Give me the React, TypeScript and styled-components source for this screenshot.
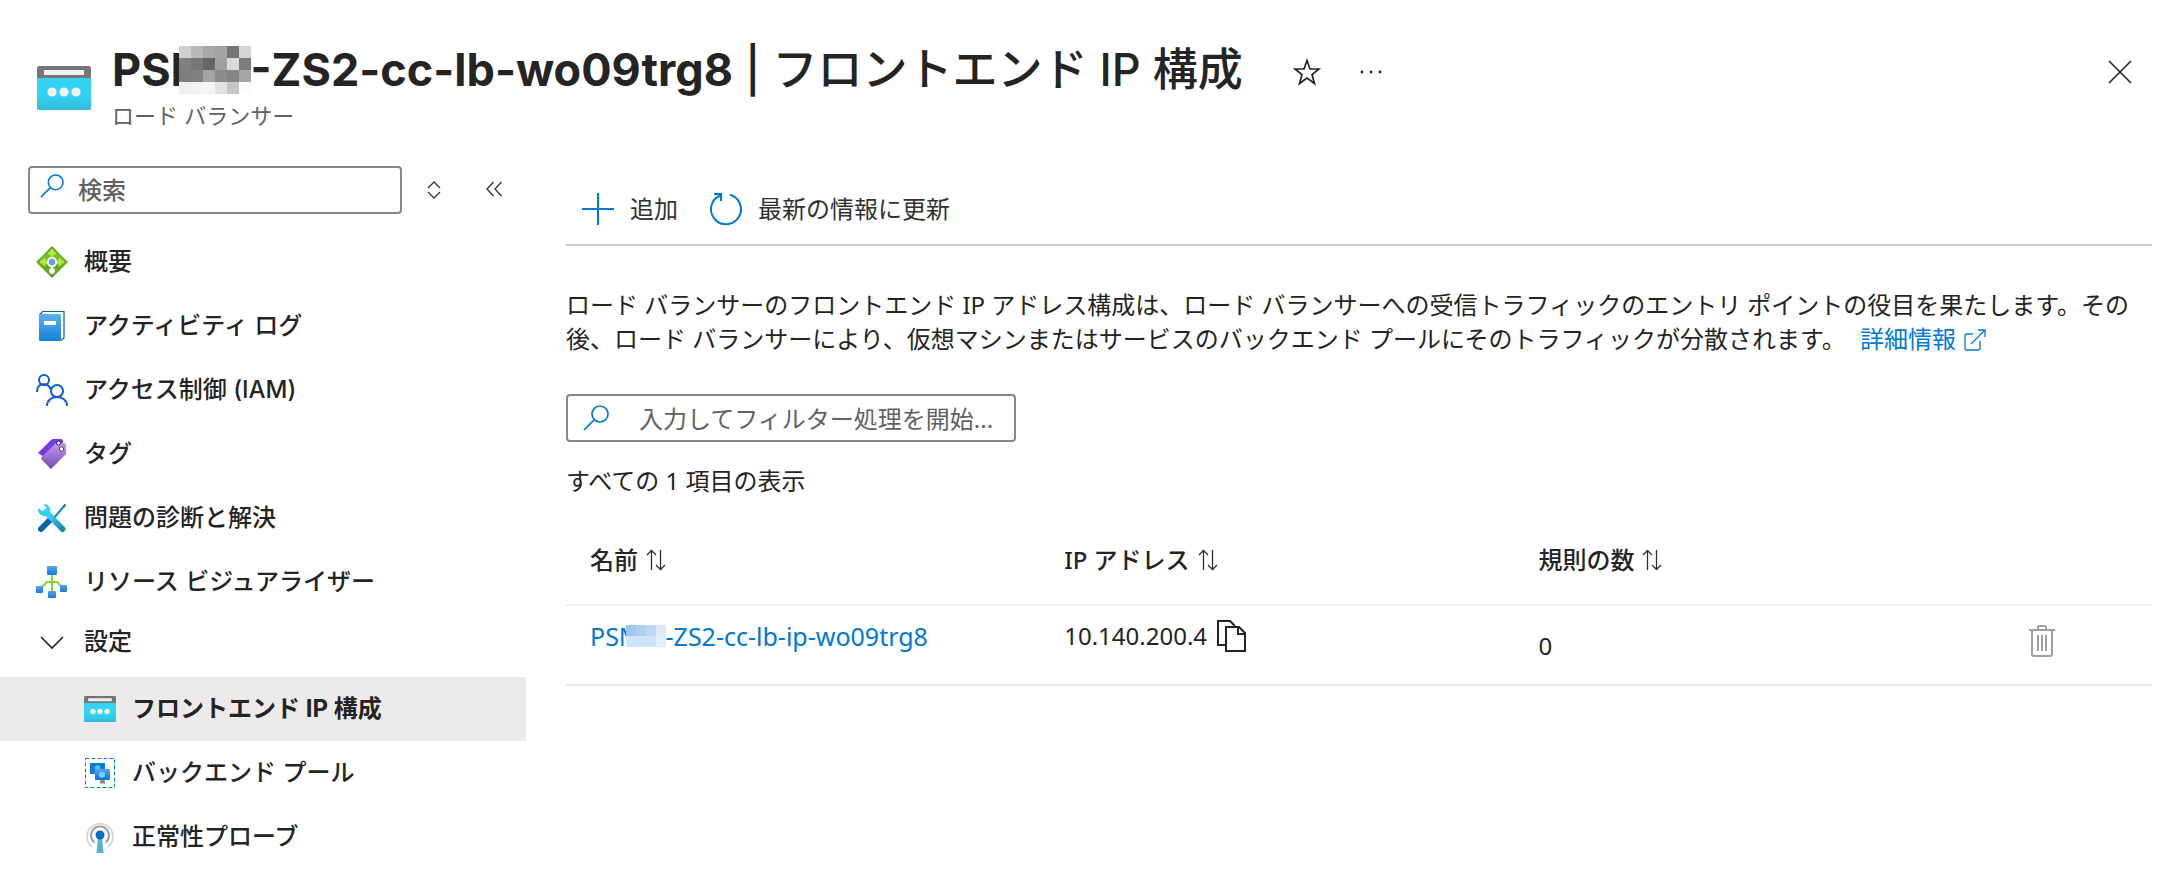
import React from "react";
import styled, { createGlobalStyle } from "styled-components";

const ui = `Inter, "Noto Sans CJK JP", sans-serif`;
const body = `"Noto Sans", "Noto Sans CJK JP", sans-serif`;

const GlobalStyle = createGlobalStyle`
  * { box-sizing: border-box; }
  body { margin: 0; background: #fff; color: #242424; font-family: ${ui}; font-size: 24px; line-height: 32px; }
  button { font: inherit; color: inherit; background: none; border: 0; padding: 0; display: flex; align-items: center; cursor: pointer; }
  a { text-decoration: none; color: #0078d4; }
  h1, p { margin: 0; }
  svg { display: block; flex: none; }
`;

const Header = styled.header`
  display: flex;
  align-items: flex-start;
  padding: 40px 32px 0 37px;
`;
const HeaderIcon = styled.div`
  margin: 26px 21px 0 0;
`;
const TitleBlock = styled.div`
  flex: 1;
`;
const TitleRow = styled.div`
  display: flex;
  align-items: center;
  height: 60px;
`;
const Title = styled.h1`
  display: flex;
  align-items: center;
  font-size: 45px;
  font-weight: 700;
  line-height: 60px;
  white-space: pre;
`;
const TitleSection = styled.span`
  font-weight: 500;
`;
const Subtitle = styled.p`
  font-size: 22px;
  color: #616161;
`;
const TitleActions = styled.div`
  display: flex;
  align-items: center;
  gap: 38px;
  margin: 4px 0 0 50px;
`;
const CloseButton = styled.button`
  margin-top: 20px;
`;

const Columns = styled.div`
  display: flex;
  align-items: flex-start;
  margin-top: 34px;
`;
const Sidebar = styled.aside`
  flex: 0 0 526px;
`;
const SearchRow = styled.div`
  display: flex;
  align-items: center;
  padding-left: 28px;
  margin-bottom: 16px;
`;
const Field = styled.label<{ $width: number; $gap: number; $inset: number }>`
  display: flex;
  align-items: center;
  gap: ${(p) => p.$gap}px;
  width: ${(p) => p.$width}px;
  height: 48px;
  padding: 0 8px 0 ${(p) => p.$inset}px;
  border: 2px solid #8a8886;
  border-radius: 4px;
`;
const Input = styled.input`
  flex: 1;
  min-width: 0;
  height: 40px;
  padding: 0;
  border: 0;
  outline: 0;
  background: transparent;
  font: inherit;
  color: #242424;
  &::placeholder { color: #616161; opacity: 1; }
`;
const MenuSearch = styled(Field)`
  font-weight: 500;
  svg { margin-bottom: 8px; }
`;
const SortToggle = styled.button`
  margin-left: 24px;
`;
const CollapseToggle = styled.button`
  margin: 0 0 2px 43px;
`;

const NavLink = styled.a<{ $nested?: boolean; $active?: boolean }>`
  display: flex;
  align-items: center;
  gap: 16px;
  height: 64px;
  padding-left: ${(p) => (p.$nested ? 84 : 36)}px;
  background: ${(p) => (p.$active ? "#edebe9" : "transparent")};
  color: #242424;
  font-weight: ${(p) => (p.$active ? 700 : 500)};
`;
const NavGroup = styled.button`
  && {
    gap: 16px;
    width: 100%;
    height: 56px;
    margin-bottom: 7px;
    padding-left: 36px;
    font-weight: 500;
  }
`;

const Main = styled.main`
  flex: 1;
  min-width: 0;
  margin: 0 12px 0 40px;
  font-family: ${body};
`;
const Toolbar = styled.div`
  display: flex;
  align-items: center;
  gap: 32px;
  height: 80px;
  padding: 8px 0 0 16px;
  border-bottom: 2px solid #c8c8c8;
  color: #323130;
`;
const ToolButton = styled.button`
  && { gap: 16px; }
`;
const Description = styled.p`
  margin: 42px 0 38px;
  line-height: 34px;
`;
const MoreLink = styled.a`
  margin-left: 8px;
  svg {
    display: inline-block;
    margin-left: 8px;
    vertical-align: -3px;
  }
`;
const Count = styled.p`
  margin-top: 23px;
`;
const Table = styled.table`
  width: 100%;
  margin-top: 22px;
  border-collapse: collapse;
  table-layout: fixed;
  text-align: left;
`;
const HeadCell = styled.th<{ $width?: string }>`
  width: ${(p) => p.$width ?? "auto"};
  height: 86px;
  padding: 0 24px 4px;
  border-bottom: 2px solid #f0f0f0;
`;
const SortButton = styled.button`
  && { gap: 8px; font-weight: 500; }
`;
const Cell = styled.td`
  height: 80px;
  padding: 14px 24px;
  border-bottom: 2px solid #e6e6e6;
  vertical-align: top;
`;
const CountCell = styled(Cell)`
  padding-top: 24px;
`;
const Inline = styled.span`
  display: flex;
  align-items: center;
  gap: 10px;
`;
const DeleteButton = styled.button`
  && { margin: 5px 0 0 auto; padding-right: 73px; }
`;
const NameLink = styled.a`
  display: flex;
  align-items: center;
  font-size: 25px;
`;
const Mosaic = styled.svg<{ $overlap: number }>`
  position: relative;
  margin-left: -${(p) => p.$overlap}px;
`;

function Pixels({ rows, w, h, overlap }: { rows: string[][]; w: number; h: number; overlap: number }) {
  const width = rows[0].length * w;
  const height = rows.length * h;
  return (
    <Mosaic $overlap={overlap} width={width} height={height} shapeRendering="crispEdges" aria-hidden="true">
      {rows.flatMap((row, y) =>
        row.map((c, x) => <rect key={`${x}-${y}`} x={x * w} y={y * h} width={w} height={h} fill={c} />),
      )}
    </Mosaic>
  );
}

const titlePixels = [
  ["#cfcfcf", "#b9b9b9", "#a9a9a9", "#a4a4a4", "#777", "#d6d6d6"],
  ["#808080", "#777", "#666", "#a0a0a0", "#dadada", "#7c7c7c"],
  ["#7c7c7c", "#808080", "#a4a4a4", "#8c8c8c", "#868686", "#a6a6a6"],
  ["#efefef", "#f2f2f2", "#f4f4f4", "#e2e2e2", "#c6c6c6", "#fcfcfc"],
];
const linkPixels = [
  ["#9cc8ec", "#acd0f0", "#bcd8f3", "#dcebf9"],
  ["#cfe4f6", "#cfe4f6", "#cfe4f6", "#e2effa"],
];

function FrontendIcon({ size }: { size: number }) {
  return (
    <svg width={size} height={(size * 44) / 54} viewBox="0 0 54 44">
      <defs>
        <linearGradient id="fe" x1="0" y1="0" x2="0" y2="1">
          <stop offset="0.5" stopColor="#32d4f5" />
          <stop offset="1" stopColor="#32bcdc" />
        </linearGradient>
      </defs>
      <path d="M0 11h54v31a2 2 0 0 1-2 2H2a2 2 0 0 1-2-2z" fill="url(#fe)" />
      <path d="M2 0h50a2 2 0 0 1 2 2v10H0V2a2 2 0 0 1 2-2z" fill="#767676" />
      <rect x="7" y="4" width="40" height="5" rx="1" fill="#f2f2f2" />
      <circle cx="15" cy="26" r="4.6" fill="#f2f2f2" />
      <circle cx="27" cy="26" r="4.6" fill="#f2f2f2" />
      <circle cx="39" cy="26" r="4.6" fill="#f2f2f2" />
    </svg>
  );
}

const OverviewIcon = () => (
  <svg width="32" height="32" viewBox="0 0 32 32">
    <defs>
      <linearGradient id="ov" x1="0" y1="0" x2="0" y2="1">
        <stop offset="0" stopColor="#5e9624" />
        <stop offset="0.3" stopColor="#76bc2d" />
        <stop offset="1" stopColor="#5e9624" />
      </linearGradient>
    </defs>
    <path d="M16 0l16 16-16 16L0 16z" fill="url(#ov)" />
    <path d="M16 3l4 5h-3v4h-2V8h-3zM4 16l5-4v3h4v2H9v3zM28 16l-5-4v3h-4v2h4v3z" fill="#b4ec36" stroke="#b4ec36" />
    <path d="M15 19h2v4h-2z" fill="#f2f2f2" />
    <circle cx="16" cy="25" r="3" fill="#f2f2f2" />
    <circle cx="16" cy="16" r="5.2" fill="#f2f2f2" />
    <circle cx="16" cy="16" r="3.2" fill="#5ea0ef" />
  </svg>
);
const LogIcon = () => (
  <svg width="32" height="32" viewBox="0 0 32 32">
    <defs>
      <linearGradient id="lg" x1="0" y1="0" x2="0" y2="1">
        <stop offset="0" stopColor="#5eb0f0" />
        <stop offset="1" stopColor="#1482d8" />
      </linearGradient>
    </defs>
    <path d="M3.500 5L6.500 1.500H28V28L25 30.500" fill="#fff" stroke="#155ea1" strokeWidth="1.200" />
    <rect x="3" y="4" width="22" height="27" rx="1" fill="url(#lg)" />
    <rect x="8" y="11" width="12" height="4" fill="#fff" />
  </svg>
);
const AccessIcon = () => (
  <svg width="32" height="32" viewBox="0 0 32 32" fill="none" stroke="#0f5bd8" strokeWidth="2">
    <circle cx="8" cy="6" r="5" />
    <path d="M1 18c0-10 11-10 14-2.500" />
    <circle cx="21" cy="17" r="6" />
    <path d="M11 32c0-12 20-12 20 0" />
  </svg>
);
const TagIcon = () => (
  <svg width="32" height="32" viewBox="0 0 32 32">
    <defs>
      <linearGradient id="tg" x1="0" y1="0" x2="0" y2="1">
        <stop offset="0" stopColor="#c69aeb" />
        <stop offset="1" stopColor="#6f4bb2" />
      </linearGradient>
    </defs>
    <path d="M2 15L15 2q1-1 3-1h7q2 0 2 2v6L8 19z" fill="#773adc" />
    <path d="M6 18.500L19 6q1-1 2-1h7q2 0 2 2v8q0 1-1 2L15 31 5 21z" fill="url(#tg)" />
    <circle cx="22.500" cy="5" r="2" fill="#fff" stroke="#341a6e" />
    <circle cx="25.500" cy="11" r="2.200" fill="#fff" stroke="#552f99" />
  </svg>
);
const ToolsIcon = () => (
  <svg width="32" height="32" viewBox="0 0 32 32">
    <defs>
      <linearGradient id="tl" x1="0" y1="0" x2="1" y2="1">
        <stop offset="0.2" stopColor="#32d4f5" />
        <stop offset="1" stopColor="#198ab3" />
      </linearGradient>
    </defs>
    <path d="M29.500 2.500L17 17" stroke="#1b7fae" strokeWidth="2" />
    <path d="M30 2l-3.500 1.500 2 2z" fill="#1b7fae" />
    <path d="M14.500 17.500L5 27" stroke="#0a63a5" strokeWidth="6" strokeLinecap="round" />
    <path d="M10 10L26.500 27" stroke="url(#tl)" strokeWidth="6" strokeLinecap="round" />
    <path d="M7 2.500q4-1 6 2 2 2.500 1 6l-3 3.500q-5 1-8-3-1.500-2-.5-5l4 3.500 3-1 1-3z" fill="#32d0f0" />
  </svg>
);
const TreeIcon = () => (
  <svg width="32" height="32" viewBox="0 0 32 32">
    <defs>
      <linearGradient id="tr" x1="0" y1="0" x2="0" y2="1">
        <stop offset="0" stopColor="#5ea0ef" />
        <stop offset="1" stopColor="#0f7adb" />
      </linearGradient>
    </defs>
    <path d="M16 9v17M4 23l7-7h10l7 7" fill="none" stroke="#86d633" strokeWidth="2" />
    <rect x="11" y="0" width="10" height="9" rx="1" fill="url(#tr)" />
    <rect x="0" y="20" width="7" height="7" rx="1" fill="url(#tr)" />
    <rect x="12" y="25" width="8" height="7" rx="1" fill="url(#tr)" />
    <rect x="24" y="19" width="7" height="7" rx="1" fill="url(#tr)" />
  </svg>
);
const ChevronIcon = () => (
  <svg width="32" height="32" viewBox="0 0 32 32" fill="none" stroke="#242424" strokeWidth="1.600">
    <path d="M5 11l11 11 11-11" />
  </svg>
);
const PoolIcon = () => (
  <svg width="32" height="32" viewBox="0 0 32 32">
    <defs>
      <linearGradient id="pl" x1="0" y1="0" x2="0" y2="1">
        <stop offset="0" stopColor="#5ea0ef" />
        <stop offset="1" stopColor="#0078d4" />
      </linearGradient>
    </defs>
    <rect x="1.500" y="1.500" width="29" height="29" fill="none" stroke="#0f7adb" strokeDasharray="4 2" />
    <rect x="6" y="6" width="15" height="11" fill="#0f7adb" />
    <circle cx="13.500" cy="11" r="2.800" fill="#50c8f5" />
    <rect x="11" y="12" width="15" height="11" rx="1" fill="url(#pl)" />
    <path d="M18 14.500l3 1.500v3.500l-3 1.500-3-1.500V16z" fill="#6bd8f5" />
    <path d="M16.500 23h4l1 3.500h-6z" fill="#8a8a8a" />
  </svg>
);
const ProbeIcon = () => (
  <svg width="32" height="34" viewBox="0 0 32 34" fill="none">
    <path d="M8 27a13 13 0 1 1 16 0" stroke="#d2d2d2" strokeWidth="1.600" />
    <path d="M10.500 22.500a9 9 0 1 1 11 0" stroke="#999" strokeWidth="1.800" />
    <path d="M14 17h4l1.500 16h-7z" fill="#55b4d9" />
    <circle cx="16" cy="15" r="4.500" fill="#0072c6" />
  </svg>
);
const SearchIcon = ({ size }: { size: number }) => (
  <svg width={size} height={size} viewBox="0 0 26 26" fill="none" stroke="#0078d4" strokeWidth="1.700">
    <circle cx="17" cy="9" r="8" />
    <path d="M11.500 14.500L1 25" />
  </svg>
);
const StarIcon = () => (
  <svg width="28" height="28" viewBox="0 0 28 28" fill="none" stroke="#242424" strokeWidth="1.700">
    <path d="M14 2.500l3 8.500h9l-7 5.500 2.500 9-7.500-5.500-7.500 5.500L9 16.500 2 11h9z" />
  </svg>
);
const DotsIcon = () => (
  <svg width="24" height="24" viewBox="0 0 24 24" fill="#242424">
    <circle cx="3" cy="12" r="1.400" />
    <circle cx="12" cy="12" r="1.400" />
    <circle cx="21" cy="12" r="1.400" />
  </svg>
);
const CloseIcon = () => (
  <svg width="24" height="24" viewBox="0 0 24 24" stroke="#242424" strokeWidth="1.600">
    <path d="M1 1l22 22M23 1L1 23" />
  </svg>
);
const UpDownIcon = () => (
  <svg width="16" height="18" viewBox="0 0 16 18" fill="none" stroke="#333" strokeWidth="1.300">
    <path d="M2 7l6-6 6 6M2 11l6 6 6-6" />
  </svg>
);
const CollapseIcon = () => (
  <svg width="18" height="16" viewBox="0 0 18 16" fill="none" stroke="#333" strokeWidth="1.300">
    <path d="M8.500 1L2 8l6.500 7M16.500 1L10 8l6.500 7" />
  </svg>
);
const PlusIcon = () => (
  <svg width="32" height="32" viewBox="0 0 32 32" stroke="#0078d4" strokeWidth="2">
    <path d="M16 0v32M0 16h32" />
  </svg>
);
const RefreshIcon = () => (
  <svg width="32" height="32" viewBox="0 0 32 32" fill="none" stroke="#0078d4" strokeWidth="2">
    <path d="M20 1.800A15 15 0 1 1 10 2.500" />
    <path d="M4 1h7v7" />
  </svg>
);
const ExternalIcon = () => (
  <svg width="22" height="22" viewBox="0 0 22 22" fill="none" stroke="#0078d4" strokeWidth="1.300">
    <path d="M9 5H3a2 2 0 0 0-2 2v12a2 2 0 0 0 2 2h11a2 2 0 0 0 2-2v-7M7 15L21 1M14 1h7v7" />
  </svg>
);
const SortIcon = () => (
  <svg width="20" height="22" viewBox="0 0 20 22" fill="none" stroke="#323130" strokeWidth="1.300">
    <path d="M5.500 21V2M1 6l4.500-4.500L10 6M14.500 1v19M10 16l4.500 4.500L19 16" />
  </svg>
);
const CopyIcon = () => (
  <svg width="30" height="32" viewBox="0 0 30 32" fill="none" stroke="#242424" strokeWidth="2">
    <path d="M9 25H1V1h12l5 5" />
    <path d="M9 7h13l6 6v18H9zM21 7v7h7" fill="#fff" />
  </svg>
);
const TrashIcon = () => (
  <svg width="26" height="32" viewBox="0 0 26 32" fill="none" stroke="#a19f9d" strokeWidth="2">
    <path d="M0 5h26M3 5v24a2 2 0 0 0 2 2h16a2 2 0 0 0 2-2V5M9 5V2a1 1 0 0 1 1-1h6a1 1 0 0 1 1 1v3M9 10v16M13 10v16M17 10v16" />
  </svg>
);

const topItems = [
  { label: "概要", icon: <OverviewIcon /> },
  { label: "アクティビティ ログ", icon: <LogIcon /> },
  { label: "アクセス制御 (IAM)", icon: <AccessIcon /> },
  { label: "タグ", icon: <TagIcon /> },
  { label: "問題の診断と解決", icon: <ToolsIcon /> },
  { label: "リソース ビジュアライザー", icon: <TreeIcon /> },
];
const settingItems = [
  { label: "フロントエンド IP 構成", icon: <FrontendIcon size={32} />, active: true },
  { label: "バックエンド プール", icon: <PoolIcon /> },
  { label: "正常性プローブ", icon: <ProbeIcon /> },
];

export default function App() {
  return (
    <>
      <GlobalStyle />
      <Header>
        <HeaderIcon><FrontendIcon size={54} /></HeaderIcon>
        <TitleBlock>
          <TitleRow>
            <Title>
              PSM
              <Pixels rows={titlePixels} w={12} h={12} overlap={34} />
              -ZS2-cc-lb-wo09trg8
              <TitleSection> | フロントエンド IP 構成</TitleSection>
            </Title>
            <TitleActions>
              <button aria-label="お気に入り"><StarIcon /></button>
              <button aria-label="その他"><DotsIcon /></button>
            </TitleActions>
          </TitleRow>
          <Subtitle>ロード バランサー</Subtitle>
        </TitleBlock>
        <CloseButton aria-label="閉じる"><CloseIcon /></CloseButton>
      </Header>
      <Columns>
        <Sidebar>
          <SearchRow>
            <MenuSearch $width={374} $gap={14} $inset={10}>
              <SearchIcon size={24} />
              <Input aria-label="検索" placeholder="検索" />
            </MenuSearch>
            <SortToggle aria-label="並べ替え"><UpDownIcon /></SortToggle>
            <CollapseToggle aria-label="折りたたむ"><CollapseIcon /></CollapseToggle>
          </SearchRow>
          <nav>
            {topItems.map((item) => (
              <NavLink key={item.label} href="#">{item.icon}{item.label}</NavLink>
            ))}
            <NavGroup aria-expanded="true"><ChevronIcon />設定</NavGroup>
            {settingItems.map((item) => (
              <NavLink key={item.label} href="#" $nested $active={item.active}>{item.icon}{item.label}</NavLink>
            ))}
          </nav>
        </Sidebar>
        <Main>
          <Toolbar>
            <ToolButton><PlusIcon />追加</ToolButton>
            <ToolButton><RefreshIcon />最新の情報に更新</ToolButton>
          </Toolbar>
          <Description>
            ロード バランサーのフロントエンド IP アドレス構成は、ロード バランサーへの受信トラフィックのエントリ ポイントの役目を果たします。その後、ロード バランサーにより、仮想マシンまたはサービスのバックエンド プールにそのトラフィックが分散されます。{" "}
            <MoreLink href="#">詳細情報<ExternalIcon /></MoreLink>
          </Description>
          <Field $width={450} $gap={30} $inset={15}>
            <SearchIcon size={26} />
            <Input aria-label="フィルター" placeholder="入力してフィルター処理を開始..." />
          </Field>
          <Count>すべての 1 項目の表示</Count>
          <Table>
            <thead>
              <tr>
                <HeadCell $width="29.9%"><SortButton>名前<SortIcon /></SortButton></HeadCell>
                <HeadCell $width="29.9%"><SortButton>IP アドレス<SortIcon /></SortButton></HeadCell>
                <HeadCell $width="29.9%"><SortButton>規則の数<SortIcon /></SortButton></HeadCell>
                <HeadCell aria-label="操作" />
              </tr>
            </thead>
            <tbody>
              <tr>
                <Cell>
                  <NameLink href="#">
                    PSM
                    <Pixels rows={linkPixels} w={10} h={11} overlap={16} />
                    -ZS2-cc-lb-ip-wo09trg8
                  </NameLink>
                </Cell>
                <Cell><Inline>10.140.200.4<button aria-label="コピー"><CopyIcon /></button></Inline></Cell>
                <CountCell>0</CountCell>
                <Cell><DeleteButton aria-label="削除"><TrashIcon /></DeleteButton></Cell>
              </tr>
            </tbody>
          </Table>
        </Main>
      </Columns>
    </>
  );
}
